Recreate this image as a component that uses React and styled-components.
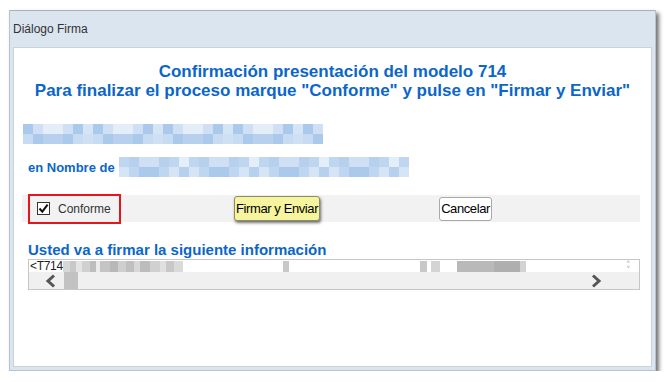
import React from 'react'
import styled, { createGlobalStyle } from 'styled-components'

const GlobalStyle = createGlobalStyle`
  html, body {
    margin: 0;
    padding: 0;
    background: #ffffff;
  }
  body {
    font-family: "Liberation Sans", Arial, sans-serif;
  }
`

const BLUE = '#0b66c9'

const Frame = styled.div`
  box-sizing: border-box;
  width: 647px;
  height: 361px;
  margin: 10px 0 0 9px;
  display: flex;
  flex-direction: column;
  background: #dae5ef;
  border: 1px solid #b9c2cb;
  border-top-color: #a9b0b8;
  box-shadow: 3px 3px 4px rgba(0, 0, 0, 0.55);
`

const TitleBar = styled.div`
  height: 36px;
  display: flex;
  align-items: center;
  padding-left: 3px;
  font-size: 12px;
  color: #333;
`

const Panel = styled.div`
  flex: 1;
  margin: 0 3px 3px 3px;
  background: #fff;
  border: 1px solid #c9d1da;
  display: flex;
  flex-direction: column;
`

const Heading = styled.h1`
  margin: 14px 0 0 0;
  text-align: center;
  font-size: 17px;
  line-height: 19px;
  font-weight: bold;
  color: ${BLUE};
`

const PixelBlock = styled.div`
  display: grid;
  grid-template-columns: repeat(${p => p.$cols}, ${p => p.$cell}px);
  grid-auto-rows: ${p => p.$cell}px;
`

const Pixel = styled.span`
  background: ${p => p.$c};
`

const BLUES = ['#c7dcf2', '#b6d0ee', '#d6e5f6', '#abc9eb', '#e3eef9', '#bfd6f0', '#cfe0f4']

const Pixelated = ({ cols, rows, seed }) => {
  const cells = []
  for (let r = 0; r < rows; r++) {
    for (let i = 0; i < cols; i++) {
      const k = (i * 37 + r * 53 + seed * 17 + ((i * i) % 7)) % BLUES.length
      cells.push(<Pixel key={r + '-' + i} $c={BLUES[k]} />)
    }
  }
  return (
    <PixelBlock $cols={cols} $cell={10}>
      {cells}
    </PixelBlock>
  )
}

const RedactedRow = styled.div`
  margin: 24px 0 0 9px;
`

const NameRow = styled.div`
  display: flex;
  align-items: center;
  gap: 4px;
  margin: 13px 0 0 14px;
`

const Label = styled.span`
  font-size: ${p => p.$size || 13}px;
  font-weight: bold;
  color: ${BLUE};
`

const ActionBar = styled.div`
  height: 27px;
  margin: 18px 11px 0 8px;
  background: #f2f2f2;
  display: flex;
  align-items: center;
`

const Consent = styled.label`
  box-sizing: border-box;
  width: 93px;
  height: 30px;
  margin-left: 6px;
  padding-left: 7px;
  border: 2px solid #e5161b;
  display: flex;
  align-items: center;
  gap: 8px;
  font-size: 12px;
  color: #333;
`

const Box = styled.span`
  box-sizing: border-box;
  width: 13px;
  height: 13px;
  border: 1px solid #333;
  background: #fff;
  display: flex;
  align-items: center;
  justify-content: center;
`

const Button = styled.button`
  box-sizing: border-box;
  height: ${p => p.$primary ? 25 : 24}px;
  margin-left: ${p => p.$gap}px;
  padding: 0 1px;
  font-family: "Liberation Sans", Arial, sans-serif;
  font-size: 13px;
  letter-spacing: -0.4px;
  color: #000;
  background: ${p => p.$primary ? '#f7f49e' : '#fff'};
  border: 1px solid ${p => p.$primary ? '#8c8c6c' : '#a9a9a9'};
  border-radius: 3px;
  box-shadow: ${p => p.$primary ? '1px 2px 3px rgba(0,0,0,0.55)' : 'none'};
`

const InfoTitle = styled(Label)`
  display: block;
  margin: 19px 0 0 14px;
  line-height: 17px;
`

const InfoBox = styled.div`
  box-sizing: border-box;
  width: 612px;
  height: 31px;
  margin: 1px 0 0 14px;
  border: 1px solid #c6c6c6;
  display: flex;
  flex-direction: column;
`

const TextLine = styled.div`
  height: 12px;
  display: flex;
  align-items: center;
  font-size: 12px;
  color: #222;
  overflow: hidden;
  position: relative;
`

const Code = styled.span`
  padding-left: 1px;
  letter-spacing: -0.3px;
`

const Blur = styled.span`
  flex: none;
  height: 11px;
  width: ${p => p.$w}px;
  margin-left: ${p => p.$gap}px;
  background: ${p => p.$c};
`

const Spinner = styled.span`
  position: absolute;
  right: 9px;
  top: 0;
  display: flex;
  flex-direction: column;
  font-size: 6px;
  line-height: 5px;
  color: #9a9a9a;
`

const ScrollBar = styled.div`
  flex: 1;
  background: #f0f0f0;
  display: flex;
  align-items: center;
`

const Arrow = styled.span`
  display: flex;
  margin-left: ${p => p.$gap}px;
`

const Thumb = styled.span`
  align-self: stretch;
  width: 14px;
  margin-left: 7px;
  background: #c2c2c2;
`

const GREY_PIECES = [
  [0, 7, '#d8d8d8'], [0, 6, '#c8c8c8'], [0, 6, '#e4e4e4'], [0, 8, '#d0d0d0'],
  [0, 6, '#bdbdbd'], [0, 4, '#ececec'], [0, 10, '#c4c4c4'], [0, 8, '#b8b8b8'],
  [0, 8, '#cfcfcf'], [0, 8, '#c0c0c0'], [0, 6, '#d8d8d8'], [0, 10, '#bcbcbc'],
  [0, 10, '#d0d0d0'], [0, 6, '#e0e0e0'], [0, 8, '#c8c8c8'], [0, 9, '#dadada'],
  [100, 6, '#c8c8c8'], [131, 7, '#c8c8c8'], [4, 9, '#d4d4d4'],
  [17, 37, '#b9b9b9'], [0, 26, '#afafaf'], [0, 6, '#d3d3d3'],
]

const Chevron = ({ dir }) => (
  <svg width="12" height="14" viewBox="0 0 12 14">
    <polyline
      points={dir === 'left' ? '9,1.5 3,7 9,12.5' : '3,1.5 9,7 3,12.5'}
      fill="none"
      stroke="#555"
      strokeWidth="3"
    />
  </svg>
)

export default function App() {
  return (
    <>
      <GlobalStyle />
      <Frame>
        <TitleBar>Diálogo Firma</TitleBar>
        <Panel>
          <Heading>
            Confirmación presentación del modelo 714
            <br />
            Para finalizar el proceso marque "Conforme" y pulse en "Firmar y Enviar"
          </Heading>

          <RedactedRow>
            <Pixelated cols={30} rows={2} seed={1} />
          </RedactedRow>

          <NameRow>
            <Label>en Nombre de</Label>
            <Pixelated cols={29} rows={2} seed={4} />
          </NameRow>

          <ActionBar>
            <Consent>
              <Box>
                <svg width="11" height="11" viewBox="0 0 11 11">
                  <path d="M1.5 5.5 L4.3 8.6 L9.6 1.6" fill="none" stroke="#111" strokeWidth="2" />
                </svg>
              </Box>
              Conforme
            </Consent>
            <Button $primary $gap={113}>Firmar y Enviar</Button>
            <Button $gap={119}>Cancelar</Button>
          </ActionBar>

          <InfoTitle $size={15}>Usted va a firmar la siguiente información</InfoTitle>
          <InfoBox>
            <TextLine>
              <Code>&lt;T714</Code>
              {GREY_PIECES.map(([gap, w, c], i) => (
                <Blur key={i} $gap={gap} $w={w} $c={c} />
              ))}
              <Spinner>
                <span>˄</span>
                <span>˅</span>
              </Spinner>
            </TextLine>
            <ScrollBar>
              <Arrow $gap={16}><Chevron dir="left" /></Arrow>
              <Thumb />
              <Arrow $gap={512}><Chevron dir="right" /></Arrow>
            </ScrollBar>
          </InfoBox>
        </Panel>
      </Frame>
    </>
  )
}
